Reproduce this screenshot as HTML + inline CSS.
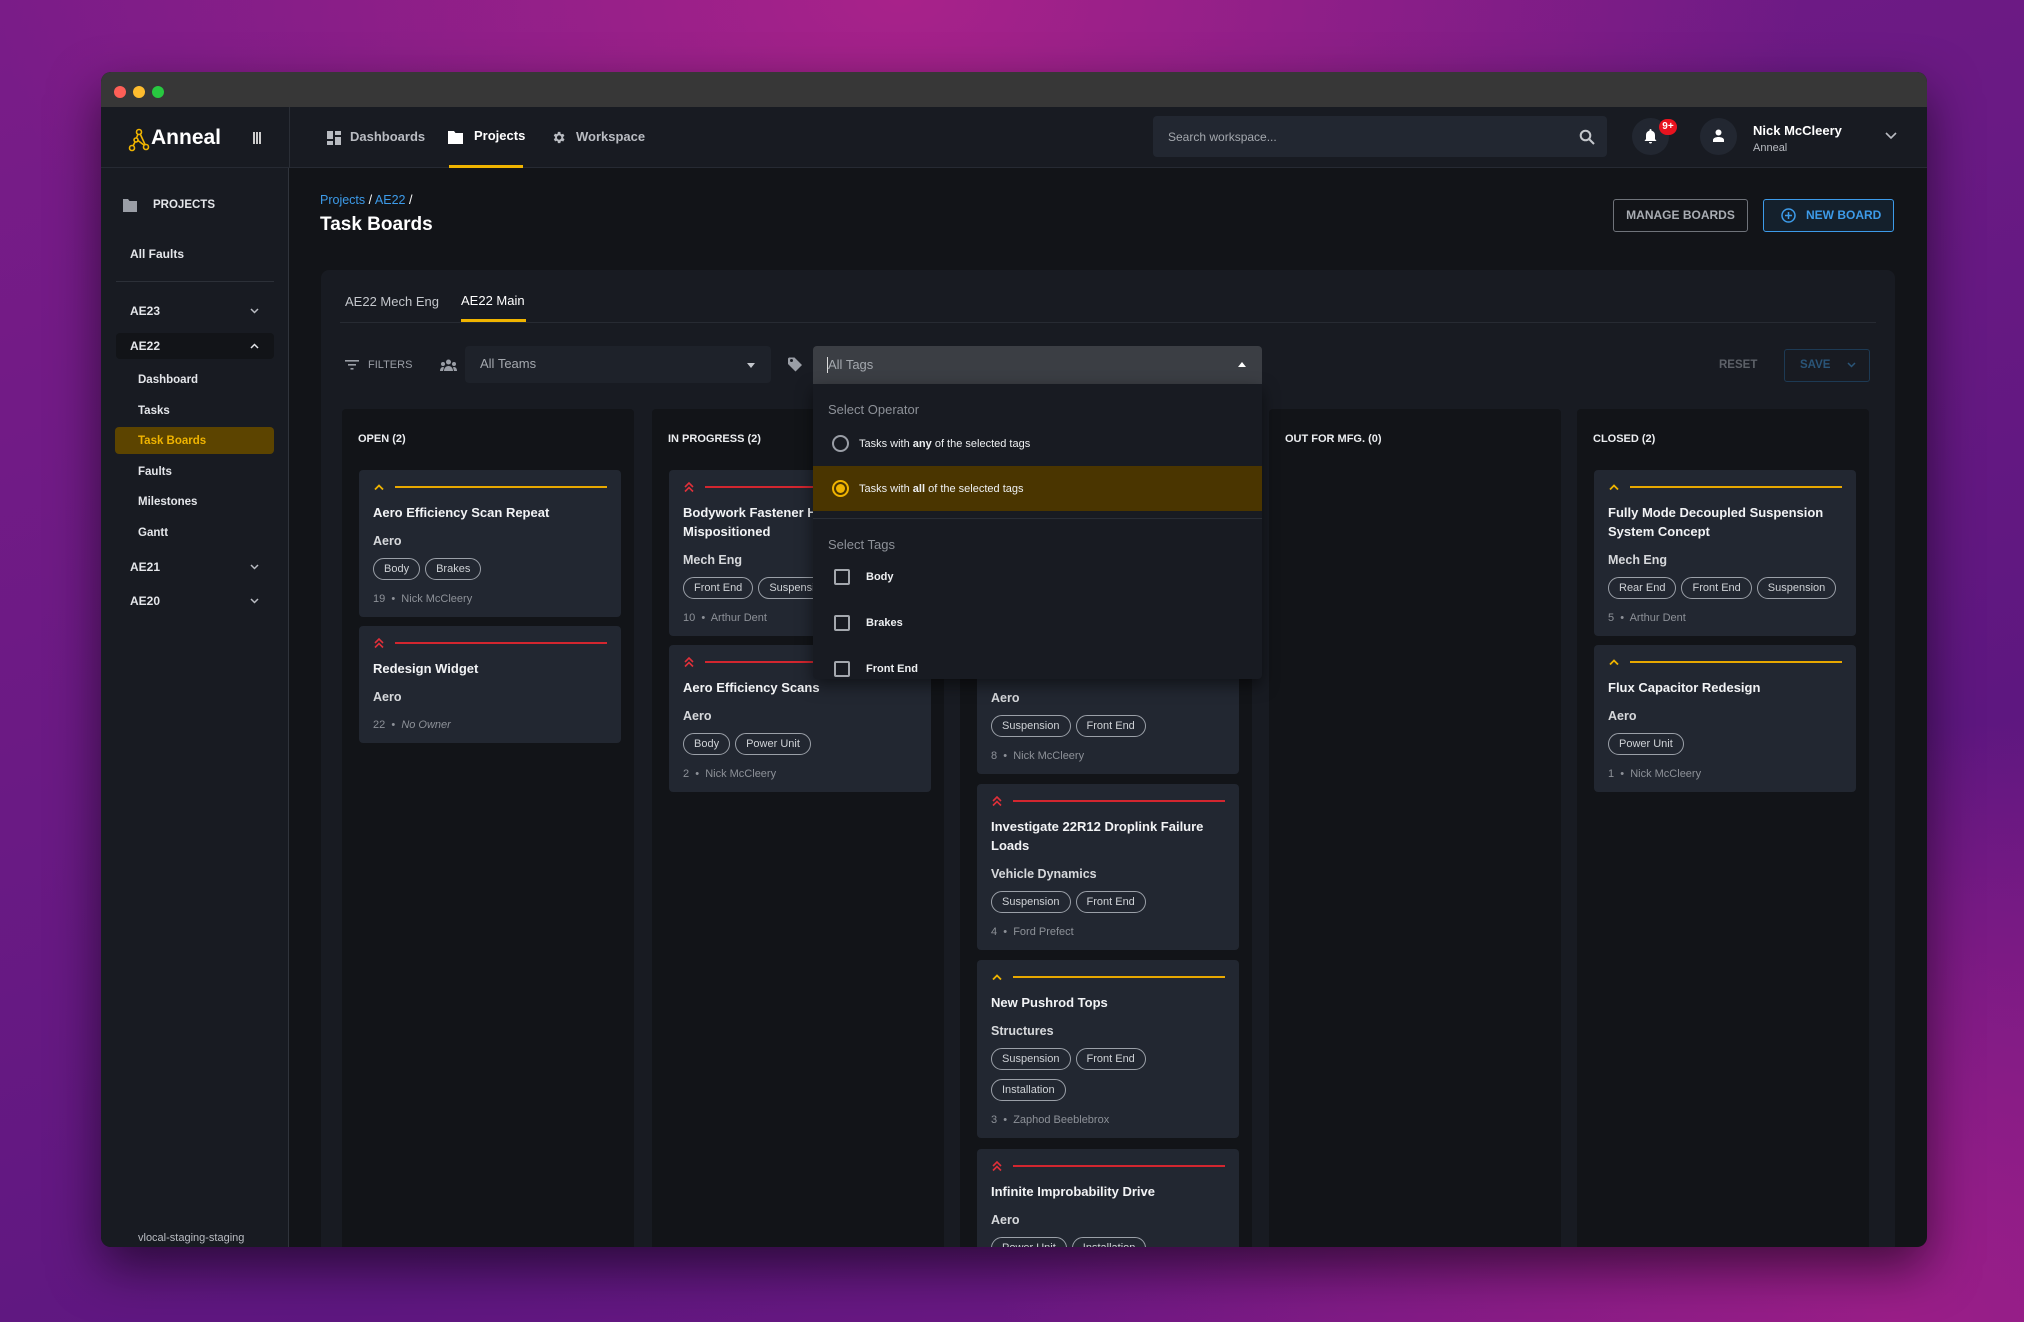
<!DOCTYPE html>
<html><head><meta charset="utf-8">
<style>
*{box-sizing:border-box;margin:0;padding:0}
html,body{width:2024px;height:1322px;overflow:hidden}
body{font-family:"Liberation Sans",sans-serif;position:relative;
background:radial-gradient(ellipse 900px 500px at 900px 0px,#a8228a 0%,rgba(168,34,138,0) 100%),
radial-gradient(ellipse 900px 600px at 1900px 1322px,#9a1e88 0%,rgba(154,30,136,0) 100%),
linear-gradient(160deg,#7a1c88 0%,#6a1a84 40%,#5e1780 70%,#7a1a86 100%);}
.win{position:absolute;left:101px;top:72px;width:1826px;height:1175px;border-radius:10px;overflow:hidden;background:#121418;box-shadow:0 20px 50px rgba(0,0,0,.55)}
.a{position:absolute;white-space:nowrap}
.tb{left:0;top:0;width:1826px;height:35px;background:#373737}
.dot{width:12px;height:12px;border-radius:50%;top:14px}
.hdr{left:0;top:35px;width:1826px;height:61px;background:#181b22;border-bottom:1px solid #262a33}
.side{left:0;top:96px;width:188px;height:1079px;background:#181b22;border-right:1px solid #30343c}
.nav{font-size:13px;font-weight:bold;color:#b9bcc2;top:57px}
.sb{font-size:12px;font-weight:bold;color:#e4e6ea}
.panel{left:220px;top:198px;width:1574px;height:1000px;background:#181b22;border-radius:8px}
.col{top:337px;width:292px;height:900px;background:#121418;border-radius:4px}
.ch{font-size:11px;font-weight:bold;color:#eceef1;top:24px;left:16px}
.card{position:absolute;left:17px;width:262px;background:#222731;border-radius:4px;padding:10px 14px 10px 14px}
.pr{height:14px;display:flex;align-items:center;gap:8px}
.pr .ln{flex:1;height:2px;margin-left:2px}
.t{margin-top:9px;font-size:13px;font-weight:bold;color:#f2f3f5;line-height:19px}
.tm{margin-top:10px;font-size:12.5px;color:#e6e7ea;line-height:18px;font-weight:bold;opacity:.92}
.tags{margin-top:8px;display:flex;flex-wrap:wrap;gap:9px 5px}
.tag{height:22px;border:1px solid #9ba0a8;border-radius:11px;padding:0 10px;font-size:11px;color:#cfd2d6;line-height:20px}
.ft{margin-top:11px;font-size:11px;color:#8d9198;line-height:16px}
.ft i{font-style:italic}
.dd{left:712px;top:312px;width:449px;height:295px;background:#181b22;border-radius:0 0 4px 4px;box-shadow:0 6px 16px rgba(0,0,0,.5)}
.lab{font-size:13px;color:#8d9198}
.opt{font-size:11px;color:#eef0f2;font-weight:bold}
</style></head><body>
<div class="win">
 <div class="a tb"></div>
 <div class="a dot" style="left:13px;background:#fe5f57"></div>
 <div class="a dot" style="left:32px;background:#febc2e"></div>
 <div class="a dot" style="left:51px;background:#28c840"></div>

 <div class="a hdr"></div>
 <div class="a" style="left:188px;top:35px;width:1px;height:61px;background:#2a2e36"></div>
 <svg class="a" style="left:26px;top:56px" width="24" height="24" viewBox="0 0 24 24" fill="none" stroke="#f0b400" stroke-width="1.6"><circle cx="12" cy="4" r="2.5"/><circle cx="5" cy="20" r="2.5"/><circle cx="19" cy="19" r="2.5"/><circle cx="9" cy="12" r="2"/><path d="M11 6L9.5 10M8 14L6 18M11 12.5L17.5 17.5M13 5.5L18 16.5"/></svg>
 <div class="a" style="left:50px;top:54px;font-size:21px;color:#fff;font-weight:bold">Anneal</div>
 <div class="a" style="left:152px;top:60px;width:8px;height:12px;border-left:2px solid #ccc;border-right:2px solid #ccc"><div style="margin-left:1px;width:2px;height:12px;background:#ccc"></div></div>

 <svg class="a" style="left:226px;top:59px" width="14" height="14" viewBox="0 0 14 14" fill="#b9bcc2"><rect x="0" y="0" width="6" height="8"/><rect x="8" y="0" width="6" height="4"/><rect x="8" y="6" width="6" height="8"/><rect x="0" y="10" width="6" height="4"/></svg>
 <div class="a nav" style="left:249px">Dashboards</div>
 <svg class="a" style="left:347px;top:58px" width="15" height="14" viewBox="0 0 15 14" fill="#fff"><path d="M0 1h6l1.5 2H15v11H0z"/></svg>
 <div class="a nav" style="left:373px;top:56px;color:#fff">Projects</div>
 <div class="a" style="left:348px;top:93px;width:74px;height:3px;background:#f0b400"></div>
 <svg class="a" style="left:450px;top:58px" width="15" height="15" viewBox="0 0 24 24" fill="#b9bcc2"><path d="M19.4 13a7.5 7.5 0 000-2l2.1-1.6-2-3.5-2.5 1a7.3 7.3 0 00-1.7-1L15 3h-4l-.4 2.7a7.3 7.3 0 00-1.7 1l-2.5-1-2 3.5L6.6 11a7.5 7.5 0 000 2l-2.1 1.6 2 3.5 2.5-1a7.3 7.3 0 001.7 1L11 21h4l.4-2.7a7.3 7.3 0 001.7-1l2.5 1 2-3.5zM13 15.5A3.5 3.5 0 1113 8.5a3.5 3.5 0 010 7z"/></svg>
 <div class="a nav" style="left:475px">Workspace</div>

 <div class="a" style="left:1052px;top:44px;width:454px;height:41px;background:#222731;border-radius:4px"></div>
 <div class="a" style="left:1067px;top:58px;font-size:12px;color:#a4a8ae">Search workspace...</div>
 <svg class="a" style="left:1478px;top:57px" width="16" height="16" viewBox="0 0 16 16" fill="none" stroke="#c4c7cc" stroke-width="2"><circle cx="6.5" cy="6.5" r="4.8"/><path d="M10 10l5 5"/></svg>
 <div class="a" style="left:1531px;top:46px;width:37px;height:37px;border-radius:50%;background:#222731"></div>
 <svg class="a" style="left:1542px;top:56px" width="15" height="16" viewBox="0 0 15 16" fill="#fff"><path d="M7.5 1a1 1 0 011 1v.6A4.5 4.5 0 0112 7v4l1.5 2h-12L3 11V7a4.5 4.5 0 013.5-4.4V2a1 1 0 011-1zM6 14h3a1.5 1.5 0 01-3 0z"/></svg>
 <div class="a" style="left:1558px;top:47px;width:18px;height:16px;border-radius:8px;background:#e8131f;color:#fff;font-size:10px;text-align:center;line-height:16px;font-weight:bold">9+</div>
 <div class="a" style="left:1599px;top:46px;width:37px;height:37px;border-radius:50%;background:#222731"></div>
 <svg class="a" style="left:1611px;top:57px" width="13" height="13" viewBox="0 0 13 13" fill="#fff"><circle cx="6.5" cy="3.5" r="3"/><path d="M1 13v-2c0-2 3-3 5.5-3S12 9 12 11v2z"/></svg>
 <div class="a" style="left:1652px;top:51px;font-size:13px;color:#fff;font-weight:bold">Nick McCleery</div>
 <div class="a" style="left:1652px;top:70px;font-size:11px;color:#b9bcc2">Anneal</div>
 <svg class="a" style="left:1784px;top:60px" width="12" height="8" viewBox="0 0 12 8" fill="none" stroke="#b9bcc2" stroke-width="1.6"><path d="M1 1l5 5 5-5"/></svg>

 <div class="a side"></div>
 <svg class="a" style="left:22px;top:127px" width="14" height="13" viewBox="0 0 14 13" fill="#9a9ea6"><path d="M0 0h5l1.5 2H14v11H0z"/></svg>
 <div class="a sb" style="left:52px;top:127px;font-size:11.5px">PROJECTS</div>
 <div class="a sb" style="left:29px;top:175px">All Faults</div>
 <div class="a" style="left:15px;top:209px;width:158px;height:1px;background:#2c3038"></div>
 <div class="a sb" style="left:29px;top:232px">AE23</div>
 <svg class="a" style="left:149px;top:236px" width="9" height="6" viewBox="0 0 9 6" fill="none" stroke="#b9bcc2" stroke-width="1.5"><path d="M1 1l3.5 3.5L8 1"/></svg>
 <div class="a" style="left:15px;top:261px;width:158px;height:26px;background:#121418;border-radius:4px"></div>
 <div class="a sb" style="left:29px;top:267px">AE22</div>
 <svg class="a" style="left:149px;top:271px" width="9" height="6" viewBox="0 0 9 6" fill="none" stroke="#e4e6ea" stroke-width="1.5"><path d="M1 5l3.5-3.5L8 5"/></svg>
 <div class="a sb" style="left:37px;top:302px;font-size:11.5px">Dashboard</div>
 <div class="a sb" style="left:37px;top:333px;font-size:11.5px">Tasks</div>
 <div class="a" style="left:14px;top:355px;width:159px;height:27px;background:#5c4400;border-radius:4px"></div>
 <div class="a sb" style="left:37px;top:363px;font-size:11.5px;color:#f0b400">Task Boards</div>
 <div class="a sb" style="left:37px;top:394px;font-size:11.5px">Faults</div>
 <div class="a sb" style="left:37px;top:424px;font-size:11.5px">Milestones</div>
 <div class="a sb" style="left:37px;top:455px;font-size:11.5px">Gantt</div>
 <div class="a sb" style="left:29px;top:488px">AE21</div>
 <svg class="a" style="left:149px;top:492px" width="9" height="6" viewBox="0 0 9 6" fill="none" stroke="#b9bcc2" stroke-width="1.5"><path d="M1 1l3.5 3.5L8 1"/></svg>
 <div class="a sb" style="left:29px;top:522px">AE20</div>
 <svg class="a" style="left:149px;top:526px" width="9" height="6" viewBox="0 0 9 6" fill="none" stroke="#b9bcc2" stroke-width="1.5"><path d="M1 1l3.5 3.5L8 1"/></svg>
 <div class="a" style="left:37px;top:1160px;font-size:11px;color:#b9bcc2">vlocal-staging-staging</div>

 <div class="a" style="left:219px;top:121px;font-size:12.5px;color:#fff"><span style="color:#3d9be9">Projects</span> / <span style="color:#3d9be9">AE22</span> /</div>
 <div class="a" style="left:219px;top:142px;font-size:19px;color:#fff;font-weight:bold">Task Boards</div>
 <div class="a" style="left:1512px;top:127px;width:135px;height:33px;border:1px solid #6f737a;border-radius:3px;color:#a9adb3;font-size:12px;font-weight:bold;text-align:center;line-height:31px">MANAGE BOARDS</div>
 <div class="a" style="left:1662px;top:127px;width:131px;height:33px;border:1px solid #3d9be9;border-radius:3px;color:#3d9be9;font-size:12px;font-weight:bold;line-height:31px;padding-left:42px;background:#14202c">NEW BOARD</div>
 <svg class="a" style="left:1680px;top:136px" width="15" height="15" viewBox="0 0 15 15" fill="none" stroke="#3d9be9" stroke-width="1.5"><circle cx="7.5" cy="7.5" r="6.5"/><path d="M7.5 4v7M4 7.5h7"/></svg>

 <div class="a panel"></div>
 <div class="a" style="left:244px;top:222px;font-size:13px;color:#c4c7cc">AE22 Mech Eng</div>
 <div class="a" style="left:360px;top:221px;font-size:13px;color:#fff">AE22 Main</div>
 <div class="a" style="left:239px;top:250px;width:1536px;height:1px;background:#272b33"></div>
 <div class="a" style="left:360px;top:247px;width:65px;height:3px;background:#f0b400"></div>

 <svg class="a" style="left:244px;top:288px" width="14" height="10" viewBox="0 0 14 10" fill="#9a9ea6"><rect x="0" y="0" width="14" height="1.6"/><rect x="3" y="4" width="8" height="1.6"/><rect x="5.5" y="8" width="3" height="1.6"/></svg>
 <div class="a" style="left:267px;top:287px;font-size:11px;color:#9a9ea6">FILTERS</div>
 <svg class="a" style="left:339px;top:287px" width="17" height="12" viewBox="0 0 17 12" fill="#9a9ea6"><circle cx="8.5" cy="3" r="2.5"/><circle cx="3" cy="5" r="2"/><circle cx="14" cy="5" r="2"/><path d="M4 12c0-3 2-5 4.5-5S13 9 13 12zM0 12c0-2 1-4 3-4l1 .3L3 12zM17 12c0-2-1-4-3-4l-1 .3 1 3.7z"/></svg>
 <div class="a" style="left:364px;top:274px;width:306px;height:37px;background:#1e222a;border-radius:4px"></div>
 <div class="a" style="left:379px;top:284px;font-size:13px;color:#a4a8ae">All Teams</div>
 <div class="a" style="left:646px;top:291px;width:0;height:0;border-left:4px solid transparent;border-right:4px solid transparent;border-top:5px solid #c4c7cc"></div>
 <svg class="a" style="left:687px;top:285px" width="15" height="15" viewBox="0 0 15 15" fill="#9a9ea6"><path d="M0 1.5V7l7.5 7.5L14 8 6.5.5H1zM3.5 5a1.5 1.5 0 110-3 1.5 1.5 0 010 3z"/></svg>
 <div class="a" style="left:712px;top:274px;width:449px;height:38px;background:#3b3e44;border-radius:4px 4px 0 0"></div>
 <div class="a" style="left:726px;top:285px;width:1px;height:16px;background:#ddd"></div>
 <div class="a" style="left:727px;top:285px;font-size:13px;color:#a4a8ae">All Tags</div>
 <div class="a" style="left:1137px;top:290px;width:0;height:0;border-left:4px solid transparent;border-right:4px solid transparent;border-bottom:5px solid #fff"></div>
 <div class="a" style="left:1618px;top:287px;font-size:11.5px;color:#5d6168;font-weight:bold">RESET</div>
 <div class="a" style="left:1683px;top:277px;width:86px;height:33px;border:1px solid #1d3a54;border-radius:3px;color:#2a5578;font-size:11.5px;font-weight:bold;line-height:31px;padding-left:15px">SAVE</div>
 <svg class="a" style="left:1746px;top:290px" width="9" height="6" viewBox="0 0 9 6" fill="none" stroke="#2a5578" stroke-width="1.5"><path d="M1 1l3.5 3.5L8 1"/></svg>

 <div class="a col" style="left:241px">
  <div class="a ch">OPEN (2)</div>
  <div class="card" style="top:61px">
   <div class="pr"><svg width="12" height="8" viewBox="0 0 12 8" fill="none" stroke="#f0b400" stroke-width="1.8"><path d="M2 6.5l4-4 4 4"/></svg><div class="ln" style="background:#e8a800"></div></div>
   <div class="t">Aero Efficiency Scan Repeat</div><div class="tm">Aero</div>
   <div class="tags"><span class="tag">Body</span><span class="tag">Brakes</span></div>
   <div class="ft">19 &nbsp;•&nbsp; Nick McCleery</div>
  </div>
  <div class="card" style="top:217px">
   <div class="pr"><svg width="12" height="12" viewBox="0 0 12 12" fill="none" stroke="#e0303a" stroke-width="1.6"><path d="M2 6l4-4 4 4M2 10.5l4-4 4 4"/></svg><div class="ln" style="background:#d3262f"></div></div>
   <div class="t">Redesign Widget</div><div class="tm">Aero</div>
   <div class="ft">22 &nbsp;•&nbsp; <i>No Owner</i></div>
  </div>
 </div>
 <div class="a col" style="left:551px">
  <div class="a ch">IN PROGRESS (2)</div>
  <div class="card" style="top:61px">
   <div class="pr"><svg width="12" height="12" viewBox="0 0 12 12" fill="none" stroke="#e0303a" stroke-width="1.6"><path d="M2 6l4-4 4 4M2 10.5l4-4 4 4"/></svg><div class="ln" style="background:#d3262f"></div></div>
   <div class="t">Bodywork Fastener Holes<br>Mispositioned</div><div class="tm">Mech Eng</div>
   <div class="tags"><span class="tag">Front End</span><span class="tag">Suspension</span></div>
   <div class="ft">10 &nbsp;•&nbsp; Arthur Dent</div>
  </div>
  <div class="card" style="top:236px">
   <div class="pr"><svg width="12" height="12" viewBox="0 0 12 12" fill="none" stroke="#e0303a" stroke-width="1.6"><path d="M2 6l4-4 4 4M2 10.5l4-4 4 4"/></svg><div class="ln" style="background:#d3262f"></div></div>
   <div class="t">Aero Efficiency Scans</div><div class="tm">Aero</div>
   <div class="tags"><span class="tag">Body</span><span class="tag">Power Unit</span></div>
   <div class="ft">2 &nbsp;•&nbsp; Nick McCleery</div>
  </div>
 </div>
 <div class="a col" style="left:859px">
  <div class="a ch">REVIEW (4)</div>
  <div class="card" style="top:218px">
   <div class="pr"><svg width="12" height="8" viewBox="0 0 12 8" fill="none" stroke="#f0b400" stroke-width="1.8"><path d="M2 6.5l4-4 4 4"/></svg><div class="ln" style="background:#e8a800"></div></div>
   <div class="t">Aero Efficiency Tests</div><div class="tm">Aero</div>
   <div class="tags"><span class="tag">Suspension</span><span class="tag">Front End</span></div>
   <div class="ft">8 &nbsp;•&nbsp; Nick McCleery</div>
  </div>
  <div class="card" style="top:375px">
   <div class="pr"><svg width="12" height="12" viewBox="0 0 12 12" fill="none" stroke="#e0303a" stroke-width="1.6"><path d="M2 6l4-4 4 4M2 10.5l4-4 4 4"/></svg><div class="ln" style="background:#d3262f"></div></div>
   <div class="t">Investigate 22R12 Droplink Failure<br>Loads</div><div class="tm">Vehicle Dynamics</div>
   <div class="tags"><span class="tag">Suspension</span><span class="tag">Front End</span></div>
   <div class="ft">4 &nbsp;•&nbsp; Ford Prefect</div>
  </div>
  <div class="card" style="top:551px">
   <div class="pr"><svg width="12" height="8" viewBox="0 0 12 8" fill="none" stroke="#f0b400" stroke-width="1.8"><path d="M2 6.5l4-4 4 4"/></svg><div class="ln" style="background:#e8a800"></div></div>
   <div class="t">New Pushrod Tops</div><div class="tm">Structures</div>
   <div class="tags"><span class="tag">Suspension</span><span class="tag">Front End</span><span class="tag">Installation</span></div>
   <div class="ft">3 &nbsp;•&nbsp; Zaphod Beeblebrox</div>
  </div>
  <div class="card" style="top:740px">
   <div class="pr"><svg width="12" height="12" viewBox="0 0 12 12" fill="none" stroke="#e0303a" stroke-width="1.6"><path d="M2 6l4-4 4 4M2 10.5l4-4 4 4"/></svg><div class="ln" style="background:#d3262f"></div></div>
   <div class="t">Infinite Improbability Drive</div><div class="tm">Aero</div>
   <div class="tags"><span class="tag">Power Unit</span><span class="tag">Installation</span></div>
   <div class="ft">6 &nbsp;•&nbsp; Nick McCleery</div>
  </div>
 </div>
 <div class="a col" style="left:1168px">
  <div class="a ch">OUT FOR MFG. (0)</div>
 </div>
 <div class="a col" style="left:1476px">
  <div class="a ch">CLOSED (2)</div>
  <div class="card" style="top:61px">
   <div class="pr"><svg width="12" height="8" viewBox="0 0 12 8" fill="none" stroke="#f0b400" stroke-width="1.8"><path d="M2 6.5l4-4 4 4"/></svg><div class="ln" style="background:#e8a800"></div></div>
   <div class="t">Fully Mode Decoupled Suspension<br>System Concept</div><div class="tm">Mech Eng</div>
   <div class="tags"><span class="tag">Rear End</span><span class="tag">Front End</span><span class="tag">Suspension</span></div>
   <div class="ft">5 &nbsp;•&nbsp; Arthur Dent</div>
  </div>
  <div class="card" style="top:236px">
   <div class="pr"><svg width="12" height="8" viewBox="0 0 12 8" fill="none" stroke="#f0b400" stroke-width="1.8"><path d="M2 6.5l4-4 4 4"/></svg><div class="ln" style="background:#e8a800"></div></div>
   <div class="t">Flux Capacitor Redesign</div><div class="tm">Aero</div>
   <div class="tags"><span class="tag">Power Unit</span></div>
   <div class="ft">1 &nbsp;•&nbsp; Nick McCleery</div>
  </div>
 </div>

 <div class="a dd"></div>
 <div class="a lab" style="left:727px;top:330px">Select Operator</div>
 <div class="a" style="left:731px;top:363px;width:17px;height:17px;border:2px solid #9a9ea6;border-radius:50%"></div>
 <div class="a opt" style="left:758px;top:366px;font-weight:normal">Tasks with <b>any</b> of the selected tags</div>
 <div class="a" style="left:712px;top:394px;width:449px;height:45px;background:#4a3500"></div>
 <div class="a" style="left:731px;top:408px;width:17px;height:17px;border:2px solid #f0b400;border-radius:50%;padding:2px"><div style="width:9px;height:9px;border-radius:50%;background:#f0b400"></div></div>
 <div class="a opt" style="left:758px;top:411px;font-weight:normal">Tasks with <b>all</b> of the selected tags</div>
 <div class="a" style="left:712px;top:446px;width:449px;height:1px;background:#2a2e36"></div>
 <div class="a lab" style="left:727px;top:465px">Select Tags</div>
 <div class="a" style="left:733px;top:497px;width:16px;height:16px;border:2px solid #a4a8ae;border-radius:2px"></div>
 <div class="a opt" style="left:765px;top:499px">Body</div>
 <div class="a" style="left:733px;top:543px;width:16px;height:16px;border:2px solid #a4a8ae;border-radius:2px"></div>
 <div class="a opt" style="left:765px;top:545px">Brakes</div>
 <div class="a" style="left:733px;top:589px;width:16px;height:16px;border:2px solid #a4a8ae;border-radius:2px"></div>
 <div class="a opt" style="left:765px;top:591px">Front End</div>
</div>
</body></html>
